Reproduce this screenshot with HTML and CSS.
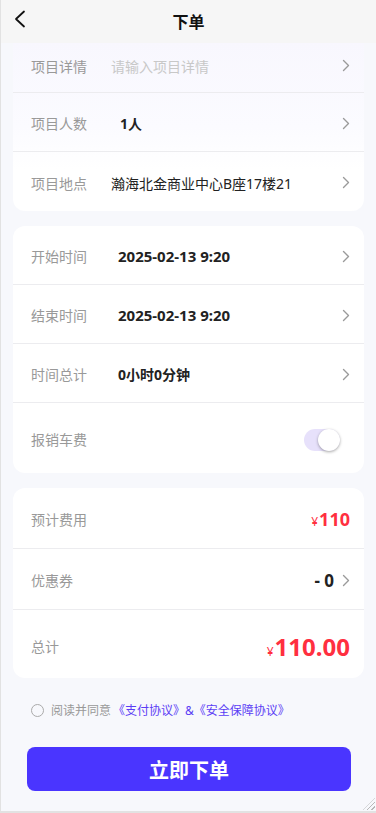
FILE: index.html
```html
<!DOCTYPE html>
<html lang="zh-CN">
<head>
<meta charset="utf-8">
<meta name="viewport" content="width=device-width, initial-scale=1">
<title>下单</title>
<link rel="stylesheet" href="styles.css">
</head>
<body>
<div class="page">
  <header class="header">
    <span class="back">
      <svg width="12" height="18" viewBox="0 0 12 18"><path d="M10 1.5 L2 9 L10 16.5" fill="none" stroke="#111" stroke-width="1.8" stroke-linecap="round" stroke-linejoin="round"/></svg>
    </span>
    <h1 class="title">下单</h1>
    <span></span>
  </header>

  <main class="content">
    <section class="card card-top">
      <div class="row row-first">
        <span class="label">项目详情</span>
        <span class="value placeholder">请输入项目详情</span>
        <span class="arrow"><svg width="8" height="13" viewBox="0 0 8 13"><path d="M1.5 1.5 L6.5 6.5 L1.5 11.5" fill="none" stroke="#9a9a9a" stroke-width="1.4" stroke-linecap="round" stroke-linejoin="round"/></svg></span>
      </div>
      <div class="row">
        <span class="label">项目人数</span>
        <span class="value strong shift">1人</span>
        <span class="arrow"><svg width="8" height="13" viewBox="0 0 8 13"><path d="M1.5 1.5 L6.5 6.5 L1.5 11.5" fill="none" stroke="#9a9a9a" stroke-width="1.4" stroke-linecap="round" stroke-linejoin="round"/></svg></span>
      </div>
      <div class="row last">
        <span class="label">项目地点</span>
        <span class="value">瀚海北金商业中心B座17楼21</span>
        <span class="arrow"><svg width="8" height="13" viewBox="0 0 8 13"><path d="M1.5 1.5 L6.5 6.5 L1.5 11.5" fill="none" stroke="#9a9a9a" stroke-width="1.4" stroke-linecap="round" stroke-linejoin="round"/></svg></span>
      </div>
    </section>

    <section class="card">
      <div class="row">
        <span class="label">开始时间</span>
        <span class="value strong shift-s date">2025-02-13 9:20</span>
        <span class="arrow"><svg width="8" height="13" viewBox="0 0 8 13"><path d="M1.5 1.5 L6.5 6.5 L1.5 11.5" fill="none" stroke="#9a9a9a" stroke-width="1.4" stroke-linecap="round" stroke-linejoin="round"/></svg></span>
      </div>
      <div class="row">
        <span class="label">结束时间</span>
        <span class="value strong shift-s date">2025-02-13 9:20</span>
        <span class="arrow"><svg width="8" height="13" viewBox="0 0 8 13"><path d="M1.5 1.5 L6.5 6.5 L1.5 11.5" fill="none" stroke="#9a9a9a" stroke-width="1.4" stroke-linecap="round" stroke-linejoin="round"/></svg></span>
      </div>
      <div class="row">
        <span class="label">时间总计</span>
        <span class="value strong shift-s">0小时0分钟</span>
        <span class="arrow"><svg width="8" height="13" viewBox="0 0 8 13"><path d="M1.5 1.5 L6.5 6.5 L1.5 11.5" fill="none" stroke="#9a9a9a" stroke-width="1.4" stroke-linecap="round" stroke-linejoin="round"/></svg></span>
      </div>
      <div class="row last row-toggle">
        <span class="label">报销车费</span>
        <span class="spacer"></span>
        <span class="switch"><span class="knob"></span></span>
      </div>
    </section>

    <section class="card">
      <div class="row row-price">
        <span class="label">预计费用</span>
        <span class="spacer"></span>
        <span class="price"><span class="yen">¥</span>110</span>
      </div>
      <div class="row row-price">
        <span class="label">优惠券</span>
        <span class="spacer"></span>
        <span class="discount">- 0</span>
        <span class="arrow arrow-gap"><svg width="8" height="13" viewBox="0 0 8 13"><path d="M1.5 1.5 L6.5 6.5 L1.5 11.5" fill="none" stroke="#9a9a9a" stroke-width="1.4" stroke-linecap="round" stroke-linejoin="round"/></svg></span>
      </div>
      <div class="row last row-total">
        <span class="label">总计</span>
        <span class="spacer"></span>
        <span class="total"><span class="yen">¥</span>110.00</span>
      </div>
    </section>

    <div class="agree">
      <span class="radio"></span>
      <span class="agree-text">阅读并同意</span>
      <span class="link">《支付协议》&amp;《安全保障协议》</span>
    </div>

    <button class="submit" type="button">立即下单</button>
  </main>
  <span class="grip"></span>
</div>
</body>
</html>
```

FILE: styles.css
```css
* { box-sizing: border-box; }
html, body { margin: 0; padding: 0; }
body {
  font-family: "Noto Sans", "Noto Sans CJK SC", sans-serif;
  background: #f7f8fc;
  color: #222;
}
.page {
  position: relative;
  width: 376px;
  height: 813px;
  border-left: 1px solid #e2e2e2;
  border-bottom: 2px solid #e2e2e2;
  background: #f7f8fc;
  overflow: hidden;
}
.header {
  height: 43px;
  background: #f6f6f6;
  display: grid;
  grid-template-columns: 40px 1fr 40px;
  align-items: center;
}
.back {
  display: flex;
  padding-left: 13px;
  margin-top: -6px;
}
.title {
  margin: 0;
  text-align: center;
  font-size: 16px;
  font-weight: 700;
  color: #111;
  line-height: 20px;
}
.content {
  padding: 0 12px;
}
.card {
  background: #fff;
  border-radius: 12px;
  margin-top: 15px;
}
.card-top {
  margin-top: 0;
  border-radius: 0 0 12px 12px;
  background: linear-gradient(180deg, #f8f7fe 0%, #fbfbff 50%, #ffffff 75%);
}
.row {
  height: 59px;
  display: flex;
  align-items: center;
  padding: 2px 14px 0 18px;
  border-bottom: 1px solid #ececef;
}
.row.last { border-bottom: none; }
.row-first { height: 50px; padding-top: 0; padding-bottom: 4px; }
.label {
  width: 80px;
  flex: none;
  font-size: 14px;
  color: #999;
}
.value {
  flex: 1;
  font-size: 14px;
  color: #222;
}
.value.placeholder { color: #c8c8c8; }
.value.strong { font-weight: 700; }
.value.date { font-size: 15px; }
.value.shift { padding-left: 9px; }
.value.shift-s { padding-left: 7px; }
.arrow {
  display: flex;
  flex: none;
}
.arrow-gap { margin-left: 8px; }
.spacer { flex: 1; }
.row-toggle { height: 70px; }
.switch {
  position: relative;
  width: 36px;
  height: 22px;
  border-radius: 11px;
  background: #e7e1fb;
  margin-right: 10px;
  margin-top: 2px;
}
.knob {
  position: absolute;
  right: 0;
  top: 0;
  width: 22px;
  height: 22px;
  border-radius: 50%;
  background: #fff;
  box-shadow: 0 1px 3px rgba(0,0,0,0.35);
}
.row-price { height: 61px; }
.price {
  color: #ff2f3f;
  font-size: 18px;
  font-weight: 700;
}
.yen {
  font-size: 12px;
  font-weight: 400;
  margin-right: 1px;
}
.discount {
  font-size: 17px;
  font-weight: 700;
  color: #222;
}
.row-total { height: 68px; padding-top: 4px; }
.total {
  color: #ff2f3f;
  font-size: 24px;
  font-weight: 700;
}
.agree {
  display: flex;
  align-items: center;
  height: 64px;
  padding-left: 18px;
  font-size: 12px;
  color: #999;
}
.radio {
  width: 13px;
  height: 13px;
  border: 1px solid #aaa;
  border-radius: 50%;
  margin-right: 7px;
}
.link { color: #5b3df5; margin-left: 2px; }
.submit {
  display: block;
  width: 324px;
  height: 44px;
  margin: 5px 0 0 14px;
  border: none;
  border-radius: 8px;
  background: #4a35ff;
  color: #fff;
  font-family: "Noto Sans CJK SC", sans-serif;
  font-size: 20px;
  font-weight: 700;
}
.grip {
  position: absolute;
  right: 1px;
  bottom: 1px;
  width: 12px;
  height: 12px;
  background: repeating-linear-gradient(135deg, transparent 0 2px, #b8b8b8 2px 3px);
  clip-path: polygon(100% 0, 100% 100%, 0 100%);
}
```
